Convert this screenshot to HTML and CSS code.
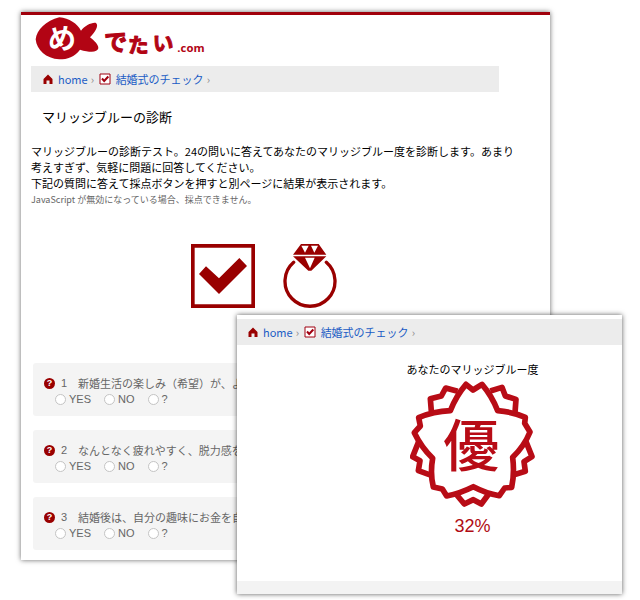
FILE: index.html
```html
<!DOCTYPE html>
<html lang="ja">
<head>
<meta charset="utf-8">
<title>マリッジブルーの診断</title>
<link rel="stylesheet" href="styles.css">
</head>
<body>
<svg class="sprite" aria-hidden="true">
  <symbol id="home" viewBox="0 0 10 10"><path d="M5 0.500 9.500 5v5H6.500V6.500h-3V10h-3V5z"/></symbol>
  <symbol id="check" viewBox="0 0 12 12"><path class="box" d="M1 1h10v10H1z"/><path class="tick" d="M3 5.500 5.200 8 9.300 3.500"/></symbol>
</svg>

<main class="window">
  <header>
    <a class="logo" href="#" aria-label="めでたい.com">
      <svg width="176" height="46" viewBox="72 45 528 138">
        <path d="M77 118C80 90 108 62 148 52C178 54 202 72 213 92C224 78 246 66 258 69C268 78 254 98 240 112C252 122 266 134 265 145C262 158 240 158 210 149C194 170 172 178 148 178C108 176 80 150 77 118Z"/>
        <text class="logo-fish" x="114" y="148">め</text>
        <text class="logo-word" x="282" y="154">で</text>
        <text class="logo-word logo-small" x="354" y="159">た</text>
        <text class="logo-word logo-small" x="428" y="154">い</text>
        <text class="logo-com" x="502" y="156">.com</text>
      </svg>
    </a>
    <nav class="crumbs">
      <svg class="home"><use href="#home"/></svg>
      <a href="#">home</a><span>›</span>
      <svg class="check"><use href="#check"/></svg>
      <a href="#">結婚式のチェック</a><span>›</span>
    </nav>
  </header>

  <h1>マリッジブルーの診断</h1>
  <p>マリッジブルーの診断テスト。24の問いに答えてあなたのマリッジブルー度を診断します。あまり考えすぎず、気軽に問題に回答してください。<br>下記の質問に答えて採点ボタンを押すと別ページに結果が表示されます。</p>
  <p class="note">JavaScript が無効になっている場合、採点できません。</p>

  <div class="pictures">
    <svg width="64" height="64" viewBox="33 40 192 192">
      <path class="frame" d="M38.500 45.500h181v181h-181z"/>
      <path d="M57 130 78 107 117 143 178 82 201 106 117 190Z"/>
    </svg>
    <svg width="54" height="64" viewBox="308 40 162 192">
      <path class="band" d="M340 95A75 75 0 1 0 438 95"/>
      <path d="M362 40H415L438 72H338ZM338 77H438L393 120H384Z"/>
      <path class="facet" d="M363 45H385L374 66ZM392 45H413L402 66ZM374 81H403L389 113Z"/>
    </svg>
  </div>

  <form class="questions">
    <fieldset>
      <legend><span class="mark">?</span><span class="num">1</span>新婚生活の楽しみ（希望）が、よくわからない</legend>
      <div class="answers">
        <label><input type="radio" name="q1">YES</label>
        <label><input type="radio" name="q1">NO</label>
        <label><input type="radio" name="q1">?</label>
      </div>
    </fieldset>
    <fieldset>
      <legend><span class="mark">?</span><span class="num">2</span>なんとなく疲れやすく、脱力感を感じる</legend>
      <div class="answers">
        <label><input type="radio" name="q2">YES</label>
        <label><input type="radio" name="q2">NO</label>
        <label><input type="radio" name="q2">?</label>
      </div>
    </fieldset>
    <fieldset>
      <legend><span class="mark">?</span><span class="num">3</span>結婚後は、自分の趣味にお金を自由に使えない</legend>
      <div class="answers">
        <label><input type="radio" name="q3">YES</label>
        <label><input type="radio" name="q3">NO</label>
        <label><input type="radio" name="q3">?</label>
      </div>
    </fieldset>
  </form>
</main>

<aside class="result">
  <nav class="crumbs">
    <svg class="home"><use href="#home"/></svg>
    <a href="#">home</a><span>›</span>
    <svg class="check"><use href="#check"/></svg>
    <a href="#">結婚式のチェック</a><span>›</span>
  </nav>
  <div class="score">
    <h2>あなたのマリッジブルー度</h2>
    <svg class="seal" width="126" height="128" viewBox="42 90 378 384">
      <path d="M163 182Q180 138 210 103L231 120 258 103Q288 138 305 182Q348 185 388 202L386 220 402 246Q385 288 350 322Q356 370 347 412L326 414 310 437Q270 430 232 410Q192 430 152 438L139 417 112 411Q102 370 110 325Q75 290 55 248L73 228 68 203Q112 184 163 182Z"/>
      <path d="M106 184 103 146 136 138 149 114 185 124M283 123 318 112 328 138 360 148 357 188M390 275 408 320 384 335 388 364 354 374M68 275 50 320 72 332 67 362 106 376M180 432 205 462 232 449 256 462 278 432"/>
      <text x="226" y="347">優</text>
    </svg>
    <strong>32%</strong>
  </div>
  <div class="result-foot"></div>
</aside>
</body>
</html>
```

FILE: styles.css
```css
* {
  box-sizing: border-box;
}

body {
  position: relative;
  min-height: 600px;
  margin: 0;
  padding: 12px 90px 40px 21px;
  background: #fff;
  color: #000;
  font: 11px/16px "Noto Sans CJK JP", sans-serif;
}

h1,
h2,
p {
  margin: 0;
  font-weight: 400;
}

svg {
  display: block;
  flex: none;
  fill: #900;
}

.sprite {
  position: absolute;
  width: 0;
  height: 0;
}

.window {
  padding: 0 30px 10px 10px;
  border-top: 3px solid #a0000c;
  background: #fff;
  box-shadow: 0 0 5px rgba(0, 0, 0, 0.6);
}

.logo {
  display: block;
  width: 176px;
  margin-left: 3px;
}

.logo svg {
  fill: #b20414;
}

.logo text {
  font-weight: 700;
}

.logo .logo-fish {
  fill: #fff;
  font-size: 84px;
}

.logo-word {
  font-size: 70px;
  stroke: #b20414;
  stroke-width: 3;
  stroke-linejoin: round;
}

.logo-small {
  font-size: 62px;
}

.logo-com {
  font-family: "Open Sans", sans-serif;
  font-size: 34px;
}

.crumbs {
  display: flex;
  align-items: center;
  height: 26px;
  background: #ececec;
}

.window .crumbs {
  margin: 5px 21px 0 0;
  padding-left: 12px;
}

.crumbs a {
  color: #1b5cc5;
  text-decoration: none;
}

.crumbs span {
  width: 11px;
  padding-left: 3px;
  color: #888;
}

.home {
  width: 10px;
  height: 10px;
  margin-right: 5px;
}

.check {
  width: 12px;
  height: 12px;
  margin-right: 5px;
}

.box {
  fill: #fff;
  stroke: #a00010;
}

.tick {
  fill: none;
  stroke: #a00010;
  stroke-width: 2;
}

h1 {
  margin: 15px 0 16px 11px;
  font-size: 13px;
  line-height: 20px;
}

.note {
  margin-top: 1px;
  color: #666;
  font-size: 9px;
}

.pictures {
  display: flex;
  gap: 28px;
  margin: 36px 0 55px 160px;
}

.frame {
  fill: none;
  stroke: #900;
  stroke-width: 11;
}

.band {
  fill: none;
  stroke: #900;
  stroke-width: 10;
  stroke-linecap: round;
}

.facet {
  fill: #fff;
}

.questions {
  display: grid;
  gap: 14px;
  margin-left: 2px;
  color: #666;
}

fieldset {
  min-width: 0;
  height: 53px;
  margin: 0;
  padding: 12px 10px 9px 11px;
  border: 0;
  border-radius: 3px;
  background: #f4f4f4;
}

legend {
  display: flex;
  align-items: center;
  float: left;
  width: 100%;
  padding: 0;
}

.mark {
  width: 11px;
  height: 11px;
  border-radius: 50%;
  background: #900;
  color: #fff;
  font: 700 9px/11px "Liberation Sans", sans-serif;
  text-align: center;
}

.num {
  width: 17px;
  margin-left: 6px;
  font-family: "Liberation Sans", sans-serif;
}

.answers {
  display: flex;
  clear: both;
  gap: 13px;
  padding-left: 11px;
  font-family: "Liberation Sans", sans-serif;
}

label {
  display: flex;
  align-items: center;
  gap: 3px;
}

input {
  appearance: none;
  width: 11px;
  height: 11px;
  margin: 0;
  border: 1px solid #c4c4c4;
  border-radius: 50%;
  background: #fff;
}

input:checked {
  background: #900;
}

.result {
  position: absolute;
  top: 315px;
  right: 18px;
  left: 237px;
  padding-top: 4px;
  background: #fff;
  box-shadow: 0 0 5px rgba(0, 0, 0, 0.65);
}

.result .crumbs {
  padding-left: 11px;
}

.score {
  display: flex;
  flex-direction: column;
  align-items: center;
  padding: 16px 0 43px 86px;
}

h2 {
  font-size: 11px;
  line-height: 16px;
}

.seal {
  margin: 3px 0 6px;
  fill: none;
  stroke: #b80c16;
  stroke-width: 17;
  stroke-linejoin: round;
}

.seal text {
  fill: #b80c16;
  stroke: none;
  font-size: 168px;
  font-weight: 500;
  text-anchor: middle;
}

strong {
  color: #b00c14;
  font: 400 18px/24px "Liberation Sans", sans-serif;
}

.result-foot {
  height: 13px;
  background: #f3f3f3;
}
```
